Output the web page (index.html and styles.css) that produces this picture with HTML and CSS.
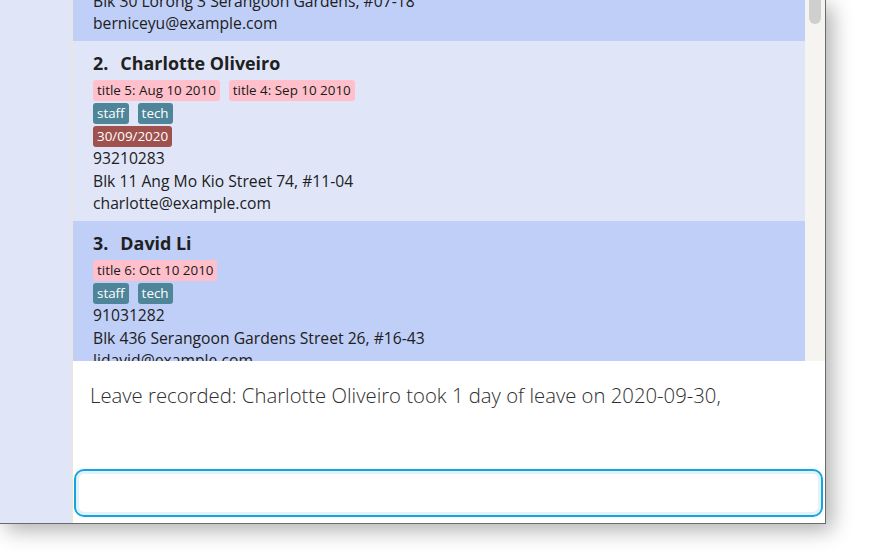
FILE: index.html
```html
<!DOCTYPE html>
<html>
<head>
<meta charset="utf-8">
<link rel="stylesheet" href="styles.css">
</head>
<body>
<div class="window">
  <div class="sidebar"></div>
  <div class="main">
    <div class="list-pane">
      <div class="list">
        <div class="card card-blue card-first">
          <div class="name"><span class="idx">1.</span>Bernice Yu</div>
          <div class="tags"><span class="tag tag-title">title 3: Jul 10 2010</span></div>
          <div class="tags"><span class="tag tag-role">colleagues</span><span class="tag tag-role">friends</span></div>
          <div class="line">99272758</div>
          <div class="line">Blk 30 Lorong 3 Serangoon Gardens, #07-18</div>
          <div class="line">berniceyu@example.com</div>
        </div>
        <div class="card card-light">
          <div class="name"><span class="idx">2.</span>Charlotte Oliveiro</div>
          <div class="tags"><span class="tag tag-title">title 5: Aug 10 2010</span><span class="tag tag-title">title 4: Sep 10 2010</span></div>
          <div class="tags"><span class="tag tag-role">staff</span><span class="tag tag-role">tech</span></div>
          <div class="tags"><span class="tag tag-leave">30/09/2020</span></div>
          <div class="line">93210283</div>
          <div class="line">Blk 11 Ang Mo Kio Street 74, #11-04</div>
          <div class="line">charlotte@example.com</div>
        </div>
        <div class="card card-blue">
          <div class="name"><span class="idx">3.</span>David Li</div>
          <div class="tags"><span class="tag tag-title">title 6: Oct 10 2010</span></div>
          <div class="tags"><span class="tag tag-role">staff</span><span class="tag tag-role">tech</span></div>
          <div class="line">91031282</div>
          <div class="line">Blk 436 Serangoon Gardens Street 26, #16-43</div>
          <div class="line">lidavid@example.com</div>
        </div>
      </div>
      <div class="scrollbar"><div class="thumb"></div></div>
    </div>
    <div class="result">Leave recorded: Charlotte Oliveiro took 1 day of leave on 2020-09-30,</div>
    <div class="command"><input class="command-input" type="text"></div>
  </div>
</div>
</body>
</html>
```
FILE: styles.css
```css
html, body {
  margin: 0;
  padding: 0;
  background: #ffffff;
  overflow: hidden;
}
body {
  width: 872px;
  height: 558px;
  font-family: "Segoe UI", "Open Sans", "Noto Sans", sans-serif;
}
.window {
  display: flex;
  width: 825px;
  height: 523px;
  border-right: 1px solid #6b6b6b;
  border-bottom: 1px solid #6b6b6b;
  background: #ffffff;
  box-shadow: 6px 6px 20px rgba(0, 0, 0, 0.32);
}
.sidebar {
  width: 71px;
  flex: none;
  background: #e0e6f8;
  border-right: 2px solid #e9e6e1;
}
.main {
  flex: 1;
  display: flex;
  flex-direction: column;
  min-width: 0;
}
.list-pane {
  height: 361px;
  flex: none;
  display: flex;
  overflow: hidden;
}
.list {
  flex: 1;
  min-width: 0;
  overflow: hidden;
}
.scrollbar {
  width: 20px;
  flex: none;
  background: #f5f4f0;
  display: flex;
  justify-content: center;
}
.thumb {
  width: 12px;
  height: 24px;
  background: #cfcfcf;
  border-radius: 0 0 6px 6px;
}
.card {
  padding: 10px 20px 6.5px 20px;
  color: #202020;
}
.card-first {
  margin-top: -116px;
}
.card-blue { background: #bfcff7; }
.card-light { background: #e0e6f8; }
.name {
  font-size: 17.9px;
  font-weight: 700;
  line-height: 24px;
  height: 24px;
  margin-bottom: 5px;
  white-space: nowrap;
}
.idx {
  margin-right: 12px;
}
.tags {
  display: flex;
  gap: 9px;
  height: 21px;
  margin-bottom: 2px;
}
.tags + .line {
  margin-top: -2px;
}
.tag {
  font-size: 13.4px;
  line-height: 21px;
  height: 21px;
  padding: 0 4px;
  border-radius: 3px;
  white-space: nowrap;
}
.tag-title { background: #ffc0cb; color: #1a1a1a; }
.tag-role { background: #4e8599; color: #ffffff; }
.tag-leave { background: #9e514d; color: #ffffff; }
.line {
  font-size: 15.7px;
  line-height: 22.5px;
  white-space: nowrap;
}
.result {
  flex: 1;
  padding: 20px 17px 0 17px;
  font-size: 20.3px;
  font-weight: 300;
  line-height: 28px;
  color: #2e2e2e;
  white-space: nowrap;
}
.command {
  padding: 0 2px 6px 1px;
}
.command-input {
  display: block;
  box-sizing: border-box;
  width: 100%;
  height: 48px;
  margin: 0;
  border: 2px solid #13a5e0;
  border-radius: 10px;
  background: #ffffff;
  box-shadow: inset 0 0 0 3px #e3f1fa;
  outline: none;
  font-family: inherit;
  font-size: 16px;
}
```
